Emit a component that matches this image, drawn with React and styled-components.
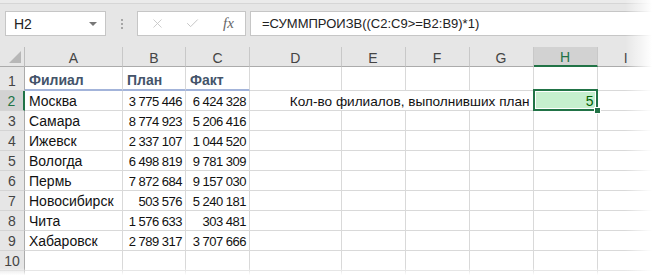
import React from 'react';
import styled, { createGlobalStyle } from 'styled-components';
import { X, Check } from 'lucide-react';

const GlobalStyle = createGlobalStyle`
  body {
    margin: 0;
    background: #fff;
    overflow: hidden;
  }
`;

const FONT = `"Liberation Sans", Arial, sans-serif`;
const GREEN = '#217346';

const Frame = styled.div`
  position: relative;
  width: 655px;
  height: 277px;
  overflow: hidden;
  font-family: ${FONT};
  background: #fff;
`;

const Toolbar = styled.div`
  height: 47px;
  box-sizing: border-box;
  padding: 11px 0 0 5px;
  display: flex;
  align-items: flex-start;
  background: linear-gradient(#ebebeb 0 3px, #d6d6d6 3px 4px, #e6e6e6 4px);
`;

const Box = styled.div`
  height: 25px;
  box-sizing: border-box;
  background: #fff;
  border: 1px solid #c6c6c6;
  display: flex;
  align-items: center;
`;

const NameBox = styled(Box)`
  width: 101px;
  padding: 0 8px 0 8px;
  justify-content: space-between;
  font-size: 14px;
  color: #222;
`;

const Caret = styled.span`
  width: 0;
  height: 0;
  border-left: 4px solid transparent;
  border-right: 4px solid transparent;
  border-top: 4px solid #777;
`;

const Grip = styled.div`
  width: 31px;
  height: 25px;
  display: flex;
  flex-direction: column;
  align-items: center;
  justify-content: center;
  gap: 2px;

  span {
    width: 2px;
    height: 2px;
    background: #a6a6a6;
  }
`;

const FxBox = styled(Box)`
  width: 109px;
  padding: 0 0 0 12px;
  gap: 20px;
  color: #c6c6c6;
`;

const Fx = styled.span`
  font-family: "Liberation Serif", "DejaVu Serif", serif;
  font-style: italic;
  font-size: 15px;
  color: #666;
  margin-left: 3px;
`;

const FormulaInput = styled(Box)`
  flex: 1;
  margin-left: 4px;
  border-right: none;
  padding-left: 11px;
  font-size: 13px;
  color: #222;
  white-space: nowrap;
`;

const Sheet = styled.div`
  display: grid;
  grid-template-columns: 25px 98px 63px 64px 91.5px 64px 64px 64px 64px 1fr;
  grid-template-rows: 20px 24px repeat(10, 20px);
  font-size: 14px;
  color: #111;
`;

const Cell = styled.div`
  box-sizing: border-box;
  border-right: 1px solid #d9d9d9;
  border-bottom: ${p => (p.$tableHead ? '2px solid #a3b4da' : '1px solid #d9d9d9')};
  display: flex;
  align-items: center;
  justify-content: ${p => (p.$right ? 'flex-end' : 'flex-start')};
  padding: ${p => (p.$right ? '0 3px 0 0' : '0 0 0 4px')};
  white-space: nowrap;
  font-weight: ${p => (p.$bold ? 700 : 400)};
  font-size: ${p => (p.$num ? '13px' : p.$size || 'inherit')};
  color: ${p => (p.$bold ? '#44546a' : 'inherit')};
  letter-spacing: ${p => (p.$num ? '-0.5px' : 'normal')};
  padding-top: ${p => (p.$bold ? '4px' : '1px')};
  grid-column: ${p => (p.$span ? `span ${p.$span}` : 'auto')};
`;

const SelectedCell = styled(Cell)`
  position: relative;
  background: #c6efce;
  color: #006100;
  border-right-color: transparent;

  &::after {
    content: '';
    position: absolute;
    top: -2px;
    left: -1px;
    right: -1px;
    bottom: -1px;
    border: 2px solid ${GREEN};
    box-shadow: inset 0 0 0 1px #fff;
  }

  &::before {
    content: '';
    position: absolute;
    right: -4px;
    bottom: -4px;
    width: 5px;
    height: 5px;
    background: ${GREEN};
    border: 1px solid #fff;
    z-index: 1;
  }
`;

const Corner = styled.div`
  position: relative;
  background: #e6e6e6;
  border-right: 1px solid #bdbdbd;
  border-bottom: 1px solid #ababab;

  &::after {
    content: '';
    position: absolute;
    right: 3px;
    bottom: 3px;
    width: 0;
    height: 0;
    border-left: 12px solid transparent;
    border-bottom: 12px solid #b7b7b7;
  }
`;

const ColHead = styled.div`
  box-sizing: border-box;
  background: ${p => (p.$active ? '#d2d2d2' : '#e6e6e6')};
  color: ${p => (p.$active ? GREEN : '#444')};
  border-right: 1px solid #c8c8c8;
  border-bottom: ${p => (p.$active ? `2px solid ${GREEN}` : '1px solid #ababab')};
  display: flex;
  align-items: center;
  justify-content: center;
  font-size: 14px;
  padding-top: 2px;
`;

const RowHead = styled.div`
  box-sizing: border-box;
  background: ${p => (p.$active ? '#d2d2d2' : '#e6e6e6')};
  color: ${p => (p.$active ? GREEN : '#444')};
  border-right: ${p => (p.$active ? `2px solid ${GREEN}` : '1px solid #ababab')};
  border-bottom: 1px solid #d4d4d4;
  display: flex;
  align-items: center;
  justify-content: center;
  font-size: 14px;
  padding-top: ${p => (p.$tall ? '4px' : '0')};
`;

const FadeRight = styled.div`
  position: absolute;
  top: 0;
  right: 0;
  width: 30px;
  height: 100%;
  background: linear-gradient(to right, rgba(255, 255, 255, 0), #fff 90%);
  pointer-events: none;
`;

const FadeBottom = styled.div`
  position: absolute;
  left: 0;
  bottom: 0;
  width: 100%;
  height: 9px;
  background: linear-gradient(rgba(255, 255, 255, 0), #fff 80%);
  pointer-events: none;
`;

const columns = ['A', 'B', 'C', 'D', 'E', 'F', 'G', 'H', 'I'];

const rows = [
  ['Москва', '3 775 446', '6 424 328'],
  ['Самара', '8 774 923', '5 206 416'],
  ['Ижевск', '2 337 107', '1 044 520'],
  ['Вологда', '6 498 819', '9 781 309'],
  ['Пермь', '7 872 684', '9 157 030'],
  ['Новосибирск', '503 576', '5 240 181'],
  ['Чита', '1 576 633', '303 481'],
  ['Хабаровск', '2 789 317', '3 707 666'],
];

const Empty = ({ count }) =>
  Array.from({ length: count }, (_, i) => <Cell key={i} />);

export default function App() {
  return (
    <Frame>
      <GlobalStyle />
      <Toolbar>
        <NameBox>
          H2
          <Caret />
        </NameBox>
        <Grip>
          <span />
          <span />
          <span />
        </Grip>
        <FxBox>
          <X size={15} strokeWidth={1.4} />
          <Check size={15} strokeWidth={1.6} />
          <Fx>fx</Fx>
        </FxBox>
        <FormulaInput>=СУММПРОИЗВ((C2:C9&gt;=B2:B9)*1)</FormulaInput>
      </Toolbar>

      <Sheet>
        <Corner />
        {columns.map(c => (
          <ColHead key={c} $active={c === 'H'}>{c}</ColHead>
        ))}

        <RowHead $tall>1</RowHead>
        <Cell $bold $tableHead>Филиал</Cell>
        <Cell $bold $tableHead>План</Cell>
        <Cell $bold $tableHead>Факт</Cell>
        <Empty count={6} />

        {rows.map((r, i) => {
          const n = i + 2;
          return (
            <React.Fragment key={n}>
              <RowHead $active={n === 2}>{n}</RowHead>
              <Cell>{r[0]}</Cell>
              <Cell $right $num>{r[1]}</Cell>
              <Cell $right $num>{r[2]}</Cell>
              {n === 2 ? (
                <>
                  <Cell $right $span={4} $size="13.6px">Кол-во филиалов, выполнивших план</Cell>
                  <SelectedCell $right>5</SelectedCell>
                  <Empty count={1} />
                </>
              ) : (
                <Empty count={6} />
              )}
            </React.Fragment>
          );
        })}

        <RowHead>10</RowHead>
        <Empty count={9} />
        <RowHead />
        <Empty count={9} />
      </Sheet>

      <FadeRight />
      <FadeBottom />
    </Frame>
  );
}
